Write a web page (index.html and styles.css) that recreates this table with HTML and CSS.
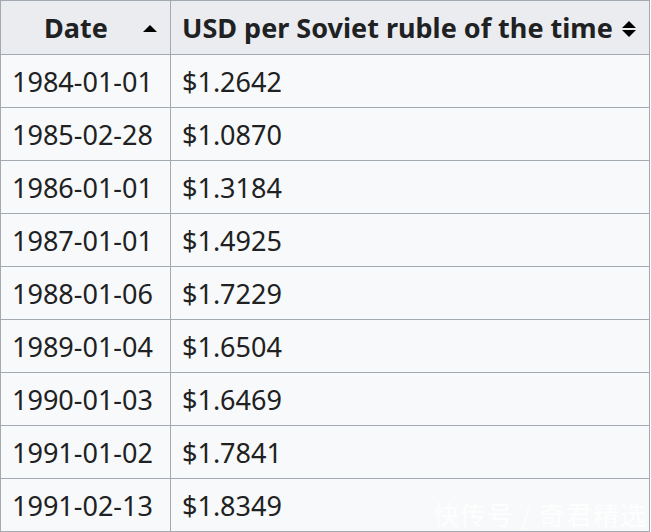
FILE: index.html
```html
<!DOCTYPE html>
<html>
<head>
<meta charset="utf-8">
<link rel="stylesheet" href="styles.css">
</head>
<body>
<div class="wrap">
<table class="wikitable">
  <thead>
    <tr>
      <th class="col-date">Date<span class="sort asc"></span></th>
      <th class="col-usd">USD per Soviet ruble of the time<span class="sort both"></span></th>
    </tr>
  </thead>
  <tbody>
    <tr><td>1984-01-01</td><td>$1.2642</td></tr>
    <tr><td>1985-02-28</td><td>$1.0870</td></tr>
    <tr><td>1986-01-01</td><td>$1.3184</td></tr>
    <tr><td>1987-01-01</td><td>$1.4925</td></tr>
    <tr><td>1988-01-06</td><td>$1.7229</td></tr>
    <tr><td>1989-01-04</td><td>$1.6504</td></tr>
    <tr><td>1990-01-03</td><td>$1.6469</td></tr>
    <tr><td>1991-01-02</td><td>$1.7841</td></tr>
    <tr><td>1991-02-13</td><td>$1.8349</td></tr>
  </tbody>
</table>
<div class="watermark">快传号 / 奇君精选</div>
</div>
</body>
</html>
```
FILE: styles.css
```css
html, body {
  margin: 0;
  padding: 0;
  background: #ffffff;
}
.wrap {
  position: relative;
  width: 651px;
  height: 532px;
  overflow: hidden;
}
.wikitable {
  border-collapse: collapse;
  width: 650px;
  font-family: "Noto Sans", "Open Sans", sans-serif;
  font-size: 27px;
  color: #202122;
  background: #f8f9fa;
  border: 1px solid #a2a9b1;
}
.wikitable th, .wikitable td {
  border: 1px solid #a2a9b1;
  padding: 0 11px;
  white-space: nowrap;
}
.wikitable th {
  position: relative;
  background: #eaecf0;
  font-weight: bold;
  height: 53px;
  text-align: center;
  padding-right: 30px;
}
.wikitable td {
  height: 52px;
  text-align: left;
}
.col-date {
  width: 128px;
}
.wikitable th.col-usd {
  text-align: left;
}
.sort {
  position: absolute;
  width: 14px;
  height: 16px;
  top: 20px;
}
.sort.asc {
  right: 13px;
}
.sort.both {
  right: 13px;
}
.sort.asc::before {
  content: "";
  position: absolute;
  left: 0;
  top: 4px;
  border-left: 7px solid transparent;
  border-right: 7px solid transparent;
  border-bottom: 7px solid #000;
}
.sort.both::before {
  content: "";
  position: absolute;
  left: 0;
  top: 0;
  border-left: 7px solid transparent;
  border-right: 7px solid transparent;
  border-bottom: 7px solid #000;
}
.sort.both::after {
  content: "";
  position: absolute;
  left: 0;
  top: 9px;
  border-left: 7px solid transparent;
  border-right: 7px solid transparent;
  border-top: 7px solid #000;
}
.watermark {
  position: absolute;
  left: 433px;
  top: 495px;
  font-family: "Noto Sans CJK SC", sans-serif;
  font-size: 26px;
  color: rgba(255, 255, 255, 0.9);
  letter-spacing: 1px;
  white-space: nowrap;
}
```
